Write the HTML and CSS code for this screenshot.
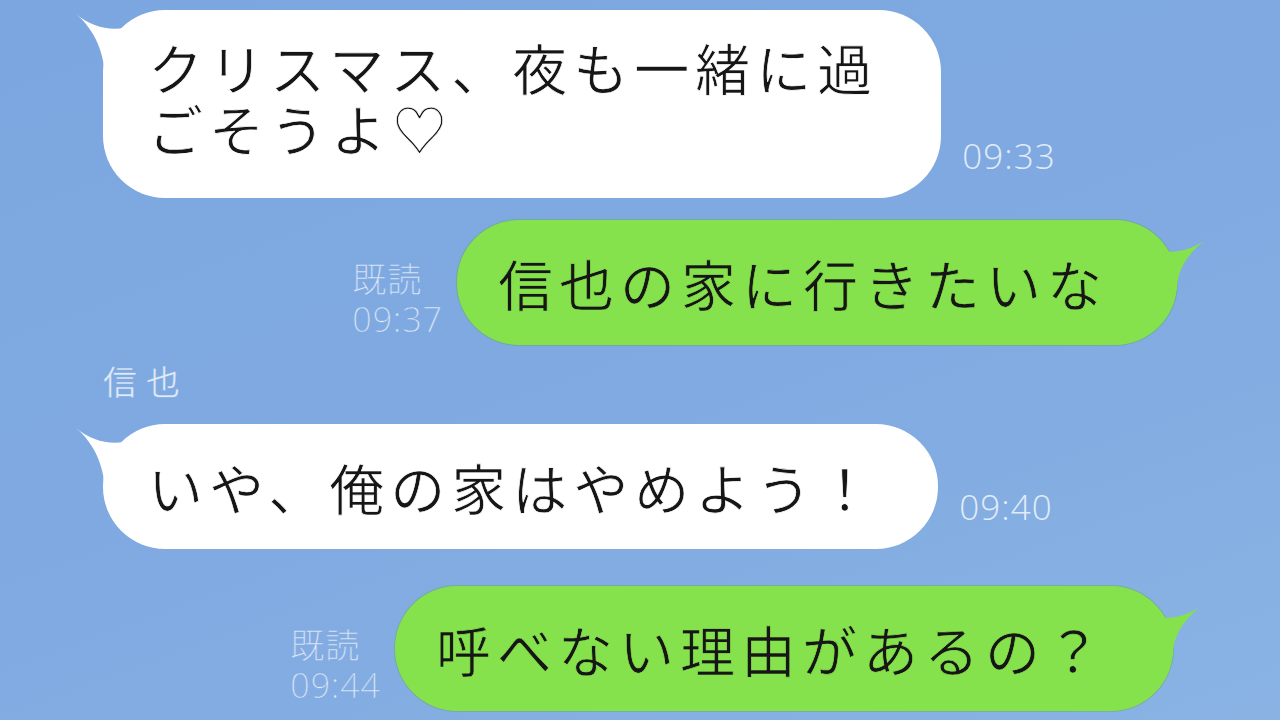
FILE: index.html
```html
<!DOCTYPE html>
<html lang="ja">
<head>
    <meta charset="UTF-8">
    <meta name="viewport" content="width=device-width, initial-scale=1.0">
    <title>トーク</title>
    <link rel="stylesheet" href="styles.css">
</head>
<body>
    <div class="chat">
        <div class="row row-in">
            <div class="bubble bubble-white bubble-multi">
                <svg class="tail tail-left" width="60" height="70" viewBox="0 0 60 70"><path d="M3 4 C20 18 40 22 60 16 L60 70 L32 70 C32 44 22 20 3 4 Z"/></svg>
                クリスマス、夜も一緒に過<br>ごそうよ♡
            </div>
            <div class="time">09:33</div>
        </div>

        <div class="row row-out">
            <div class="meta">
                <span>既読</span>
                <span>09:37</span>
            </div>
            <div class="bubble bubble-green bubble-wide">
                <svg class="tail tail-right" width="60" height="70" viewBox="0 0 60 70"><path d="M59 16 C42 31 22 35 0 29 L0 70 L26 70 C26 48 38 32 59 16 Z"/></svg>
                信也の家に行きたいな
            </div>
        </div>

        <div class="name">信也</div>

        <div class="row row-in">
            <div class="bubble bubble-white">
                <svg class="tail tail-left" width="60" height="70" viewBox="0 0 60 70"><path d="M3 4 C20 18 40 22 60 16 L60 70 L32 70 C32 44 22 20 3 4 Z"/></svg>
                いや、俺の家はやめよう！
            </div>
            <div class="time">09:40</div>
        </div>

        <div class="row row-out row-last">
            <div class="meta">
                <span>既読</span>
                <span>09:44</span>
            </div>
            <div class="bubble bubble-green">
                <svg class="tail tail-right" width="60" height="70" viewBox="0 0 60 70"><path d="M59 16 C42 31 22 35 0 29 L0 70 L26 70 C26 48 38 32 59 16 Z"/></svg>
                呼べない理由があるの？
            </div>
        </div>
    </div>
</body>
</html>
```

FILE: styles.css
```css
body {
    margin: 0;
    width: 1280px;
    height: 720px;
    overflow: hidden;
    background: linear-gradient(160deg, #7ca6df 0%, #80aae1 55%, #8ab3e4 100%);
    font-family: "Noto Sans CJK JP", "Noto Sans", sans-serif;
}
.chat {
    display: flex;
    flex-direction: column;
    padding: 10px 103px 0 103px;
}
.row {
    display: flex;
    align-items: flex-end;
}
.row-in {
    justify-content: flex-start;
}
.row-out {
    justify-content: flex-end;
    margin-top: 22px;
}
.row-last {
    margin-top: 37px;
    margin-right: 4px;
}
.bubble {
    position: relative;
    font-size: 55px;
    line-height: 70px;
    letter-spacing: 6px;
    border-radius: 62px;
    padding: 27px 60px 28px 45px;
    color: #161616;
    white-space: nowrap;
}
.bubble-white {
    background: #fff;
    -webkit-text-stroke: 0.7px #fff;
}
.bubble-multi {
    line-height: 61px;
    padding-top: 26px;
    padding-bottom: 40px;
    padding-right: 63px;
}
.bubble-green {
    background: #86e24c;
    -webkit-text-stroke: 0.7px #86e24c;
    padding: 27px 66px 28px 41px;
    box-shadow: 0 0 0 1px rgba(90, 170, 60, 0.35);
}
.bubble-wide {
    padding-right: 69px;
}
.tail {
    position: absolute;
    top: 0;
}
.tail-left {
    left: -30px;
    fill: #fff;
}
.tail-right {
    right: -34px;
    fill: #86e24c;
}
.time {
    font-family: "Open Sans", "Noto Sans CJK JP", sans-serif;
    font-size: 35px;
    line-height: 40px;
    letter-spacing: 1px;
    color: #e2ecf8;
    font-weight: 300;
    margin: 0 0 22px 21px;
}
.meta {
    display: flex;
    flex-direction: column;
    font-family: "Open Sans", "Noto Sans CJK JP", sans-serif;
    font-size: 34px;
    line-height: 40px;
    letter-spacing: 1px;
    color: #e2ecf8;
    font-weight: 300;
    margin: 0 14px 6px 0;
    -webkit-text-stroke: 0.5px #80aae1;
}
.name {
    font-size: 34px;
    line-height: 40px;
    letter-spacing: 9px;
    color: #e2ecf8;
    -webkit-text-stroke: 0.5px #80aae1;
    margin-top: 16px;
    margin-bottom: 23px;
}
```
